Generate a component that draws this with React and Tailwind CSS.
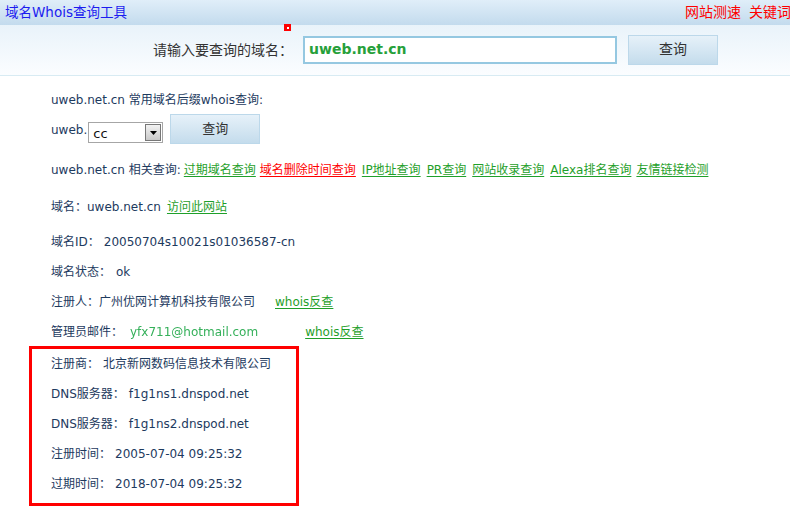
const FONT = { fontFamily: '"DejaVu Sans", "Noto Sans CJK SC", sans-serif' };

function Row({ children, className = '' }) {
  return <div className={`flex h-[30px] items-center whitespace-nowrap ${className}`}>{children}</div>;
}

function Link({ children, red, className = '' }) {
  return (
    <a href="#" className={`underline underline-offset-2 ${red ? 'text-[#ff0000]' : 'text-[#1fa02a]'} ${className}`}>
      {children}
    </a>
  );
}

export default function App() {
  return (
    <div className="h-[507px] w-[790px] overflow-hidden bg-white text-[12px] text-[#1d3a5e]" style={FONT}>
      {/* top bar */}
      <div className="flex h-[25px] items-center justify-between bg-gradient-to-b from-[#e0eef9] to-[#c3dbed] pl-[5px] text-[14px]">
        <span className="text-[13.5px] text-[#1c1cf0]">域名Whois查询工具</span>
        <span className="-mr-[1px] flex gap-[8px] text-[#ff0000]">
          <span>网站测速</span>
          <span>关键词</span>
        </span>
      </div>

      {/* search */}
      <div className="relative flex h-[51px] items-center border-b border-[#d8ebf3] bg-gradient-to-b from-[#e9f3fa] to-[#fbfdff]">
        <span className="absolute left-[284px] top-[-1px] flex h-[7px] w-[7px] items-center justify-center bg-[#ff0000]">
          <span className="h-[2px] w-[2px] bg-white" />
        </span>
        <span className="ml-[153px] text-[14px] text-[#333]">请输入要查询的域名：</span>
        <div className="ml-[10px] mt-[-1px] flex h-[28px] w-[314px] items-center border-2 border-[#95c8e1] bg-white pl-[4px] text-[14px] font-bold text-[#26a03a]">
          uweb.net.cn
        </div>
        <button className="ml-[11px] mt-[-1px] h-[30px] w-[90px] border border-[#bcd8ea] bg-gradient-to-b from-[#e6f1f9] to-[#c4dcec] text-[14px] text-[#333]">
          查询
        </button>
      </div>

      {/* content */}
      <div className="pl-[51px]">
        <div className="mt-[14px] flex h-[20px] items-center">uweb.net.cn 常用域名后缀whois查询:</div>
        <div className="mt-[4px] flex h-[30px] items-start">
          <span className="mt-[7px]">uweb.</span>
          <div className="ml-[1px] mt-[8px] flex h-[21px] w-[75px] items-center justify-between border border-[#a6a6a6] bg-white pl-[4px] pr-[1px]">
            <span className="mt-[2px] text-[13px] text-[#111]">cc</span>
            <span className="flex h-[17px] w-[16px] items-center justify-center border border-[#777] bg-gradient-to-b from-[#f2f2f2] to-[#c9c9c9]">
              <svg width="7" height="4" viewBox="0 0 7 4"><path d="M0 0h7L3.5 4z" fill="#000" /></svg>
            </span>
          </div>
          <button className="ml-[7px] h-[30px] w-[90px] border border-[#bcd8ea] bg-gradient-to-b from-[#e6f1f9] to-[#c4dcec] text-[13px] text-[#333]">
            查询
          </button>
        </div>

        <div className="mt-[16px] flex h-[20px] items-center whitespace-nowrap">
          <span>uweb.net.cn 相关查询:</span>
          <Link className="ml-[3px]">过期域名查询</Link>
          <Link red className="ml-[4px]">域名删除时间查询</Link>
          <Link className="ml-[6px]">IP地址查询</Link>
          <Link className="ml-[6px]">PR查询</Link>
          <Link className="ml-[6px]">网站收录查询</Link>
          <Link className="ml-[6px]">Alexa排名查询</Link>
          <Link className="ml-[5px]">友情链接检测</Link>
        </div>

        <Row className="mt-[12px]">
          <span>域名：uweb.net.cn</span>
          <Link className="ml-[6px]">访问此网站</Link>
        </Row>
        <Row className="mt-[5px]">
          <span>域名ID：</span>
          <span className="ml-[4px]">20050704s10021s01036587-cn</span>
        </Row>
        <Row>
          <span>域名状态：</span>
          <span className="ml-[5px]">ok</span>
        </Row>
        <Row>
          <span>注册人：广州优网计算机科技有限公司</span>
          <Link className="ml-[20px]">whois反查</Link>
        </Row>
        <Row>
          <span>管理员邮件：</span>
          <span className="ml-[7px] text-[12px] text-[#35b05a] blur-[0.3px]">yfx711@hotmail.com</span>
          <Link className="ml-[47px]">whois反查</Link>
        </Row>
      </div>

      <div className="ml-[29px] mt-[-1px] w-[270px] border-[3px] border-[#ff0000] pb-[4px] pl-[19px]">
        <Row>
          <span>注册商：</span>
          <span className="ml-[4px]">北京新网数码信息技术有限公司</span>
        </Row>
        <Row>
          <span>DNS服务器：</span>
          <span className="ml-[4px]">f1g1ns1.dnspod.net</span>
        </Row>
        <Row>
          <span>DNS服务器：</span>
          <span className="ml-[4px]">f1g1ns2.dnspod.net</span>
        </Row>
        <Row>
          <span>注册时间：</span>
          <span className="ml-[4px]">2005-07-04 09:25:32</span>
        </Row>
        <Row>
          <span>过期时间：</span>
          <span className="ml-[4px]">2018-07-04 09:25:32</span>
        </Row>
      </div>
    </div>
  );
}
